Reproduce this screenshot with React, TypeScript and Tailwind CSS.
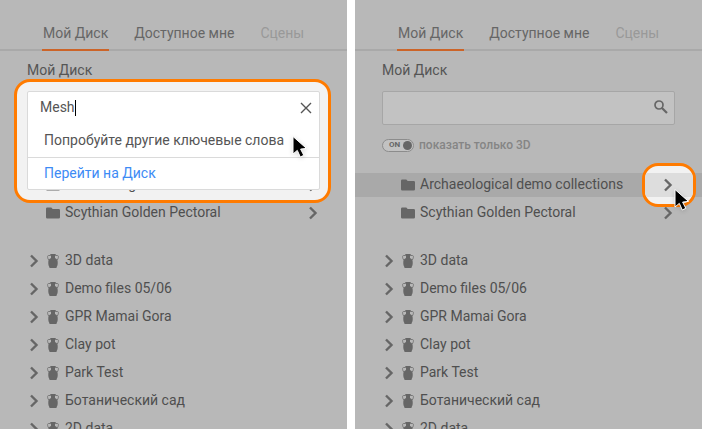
import { useState } from 'react'
import clsx from 'clsx'

const tabs = ['Мой Диск', 'Доступное мне', 'Сцены']
const folders = ['Archaeological demo collections', 'Scythian Golden Pectoral']
const projects = ['3D data', 'Demo files 05/06', 'GPR Mamai Gora', 'Clay pot', 'Park Test', 'Ботанический сад', '2D data']

function Chevron() {
  return (
    <svg className="w-3 h-4 shrink-0" viewBox="0 0 12 16" fill="none" stroke="#666666" strokeWidth="2.400">
      <path d="M3 2.500 8.500 8 3 13.500" />
    </svg>
  )
}

function FolderIcon() {
  return (
    <svg className="w-3.5 h-3 shrink-0" viewBox="0 0 14 12" fill="#666666">
      <path d="M1.300 0.500h4l1.400 1.500h6a1.300 1.300 0 0 1 1.300 1.300v7a1.300 1.300 0 0 1-1.300 1.300H1.300A1.300 1.300 0 0 1 0 10.300V1.800A1.300 1.300 0 0 1 1.300.5z" />
    </svg>
  )
}

function VaseIcon() {
  return (
    <svg className="w-3 h-3.5 shrink-0" viewBox="0 0 12 14">
      <path d="M3.300 0h5.400v1.200l-.7.500v2.300c1.700.8 2.700 2 2.700 3.700v1.800c0 1.200-.3 2.200-.8 3l-.5 1.500H2.600l-.5-1.500c-.5-.8-.8-1.800-.8-3V7.700c0-1.700 1-2.900 2.700-3.700V1.700l-.7-.5z" fill="#666666" />
      <path d="M3.800 1.500H1.500C.2 1.500.2 3.800 1.800 6.200M8.200 1.500h2.300c1.300 0 1.300 2.300-.3 4.700" fill="none" stroke="#777777" strokeWidth="1" />
    </svg>
  )
}

function SearchIcon() {
  return (
    <svg className="w-3.5 h-3.5" viewBox="0 0 14 14" fill="none" stroke="#666666">
      <circle cx="5" cy="5" r="4" strokeWidth="1.700" />
      <path d="M8 8l5 5" strokeWidth="2.200" />
    </svg>
  )
}

function CloseIcon() {
  return (
    <svg className="w-3 h-3" viewBox="0 0 12 12" fill="none" stroke="#555555" strokeWidth="1.400">
      <path d="M1 1l10 10M11 1 1 11" />
    </svg>
  )
}

function Cursor({ className }: { className: string }) {
  return (
    <svg className={clsx('absolute w-5 h-6 pointer-events-none drop-shadow-sm', className)} viewBox="0 0 20 24">
      <path d="M2 1.500v17.500l4.300-3.600 3 6.600 3.500-1.700-3.200-6.200 5.900-.7z" fill="#000" stroke="#fff" strokeWidth="1" />
    </svg>
  )
}

function Tabs() {
  return (
    <nav className="h-[51px] pl-[42px] flex items-end gap-6 border-b-2 border-[#a9a9a9]">
      {tabs.map((tab, i) => (
        <a
          key={tab}
          href="#"
          className={clsx(
            'h-[35px] -mb-0.5 px-px pt-[7px] leading-5 border-b-2 whitespace-nowrap',
            i === 0 ? 'border-[#cc6428]' : 'border-transparent',
            i === 2 ? 'text-[#999999]' : 'text-[#666666]',
          )}
        >
          {tab}
        </a>
      ))}
    </nav>
  )
}

function EmptySearch() {
  return (
    <div className="flex items-center h-[34px] pl-3 pr-1.5 border border-[#a6a6a6] rounded-xs bg-[#c2c2c2]">
      <input type="search" aria-label="Поиск" className="flex-1 min-w-0 outline-none" />
      <button type="button" aria-label="Найти" className="pb-0.5"><SearchIcon /></button>
    </div>
  )
}

function ActiveSearch() {
  const [query, setQuery] = useState('Mesh')

  return (
    <div className="relative h-[34px]">
      <div className="absolute -top-3 -left-[13px] -right-[11px] h-[124px] border-3 border-[#ff7b00] rounded-2xl bg-[#f2f2f2]" />
      <div className="absolute z-20 inset-x-0 top-0 border border-[#dadada] rounded-xs bg-white text-[#555555]">
        <div className="flex items-center h-8 pl-3 pr-[7px]">
          <input
            type="text"
            aria-label="Поиск"
            value={query}
            onChange={e => setQuery(e.target.value)}
            className="[field-sizing:content] pb-0.5 outline-none caret-transparent"
          />
          <span className="w-px h-4 bg-black" />
          <button type="button" aria-label="Очистить" className="ml-auto" onClick={() => setQuery('')}><CloseIcon /></button>
        </div>
        <p className="h-[34px] pl-4 leading-8 border-b border-[#dadada] whitespace-nowrap">Попробуйте другие ключевые слова</p>
        <a href="#" className="block h-[31px] pl-4 leading-[30px] text-[#3d8bf5]">Перейти на Диск</a>
        <Cursor className="left-[263px] top-[43px]" />
      </div>
    </div>
  )
}

function Toggle() {
  return (
    <label className="flex items-center gap-[5px] h-4 text-xs font-medium text-[#858585]">
      <input type="checkbox" defaultChecked className="sr-only" />
      <span className="flex items-center justify-between w-8 h-[13px] pl-1.5 pr-px border border-[#8c8c8c] rounded-full bg-[#c2c2c2] text-[8px] leading-none font-bold text-[#666666]">
        ON
        <span className="size-[9px] rounded-full bg-[#666666]" />
      </span>
      показать только 3D
    </label>
  )
}

function Panel({ searching = false }: { searching?: boolean }) {
  return (
    <section className="relative isolate flex-1 min-w-0 overflow-hidden bg-[#b8b8b8]">
      <Tabs />
      <h2 className="mx-[27px] mt-[9px] mb-[11px] leading-5 text-[#555555]">Мой Диск</h2>
      <div className="mx-[27px] mb-3">
        {searching ? <ActiveSearch /> : <EmptySearch />}
      </div>
      <div className="h-4 mx-[27px] mb-5">{!searching && <Toggle />}</div>
      <ul className="flex flex-col gap-1">
        {folders.map((name, i) => {
          const active = !searching && i === 0
          return (
            <li
              key={name}
              className={clsx('relative flex items-center h-6 pl-[46px] pr-7', active ? 'z-10 bg-[#a9a9a9]' : 'z-0')}
            >
              <FolderIcon />
              <span className="ml-[5px] -mt-0.5 whitespace-nowrap">{name}</span>
              {active && (
                <span className="absolute right-1.5 -top-2.5 w-[54px] h-11 pt-[7px] border-3 border-[#ff7b00] rounded-2xl bg-[#f2f2f2] overflow-hidden">
                  <span className="block h-6 bg-[#dddddd]" />
                </span>
              )}
              <button type="button" aria-label={`Открыть ${name}`} className="relative ml-auto"><Chevron /></button>
              {active && <Cursor className="right-[9px] top-[15px]" />}
            </li>
          )
        })}
      </ul>
      <ul className="flex flex-col gap-1 mt-6">
        {projects.map(name => (
          <li key={name} className="flex items-center h-6 pl-7">
            <button type="button" aria-label={`Развернуть ${name}`}><Chevron /></button>
            <span className="ml-[7px]"><VaseIcon /></span>
            <span className="ml-1.5 -mt-0.5 whitespace-nowrap">{name}</span>
          </li>
        ))}
      </ul>
    </section>
  )
}

export default function App() {
  return (
    <main className="flex gap-2 h-screen overflow-hidden bg-white font-['Roboto',sans-serif] text-sm text-[#4f4f4f]">
      <Panel searching />
      <Panel />
    </main>
  )
}
